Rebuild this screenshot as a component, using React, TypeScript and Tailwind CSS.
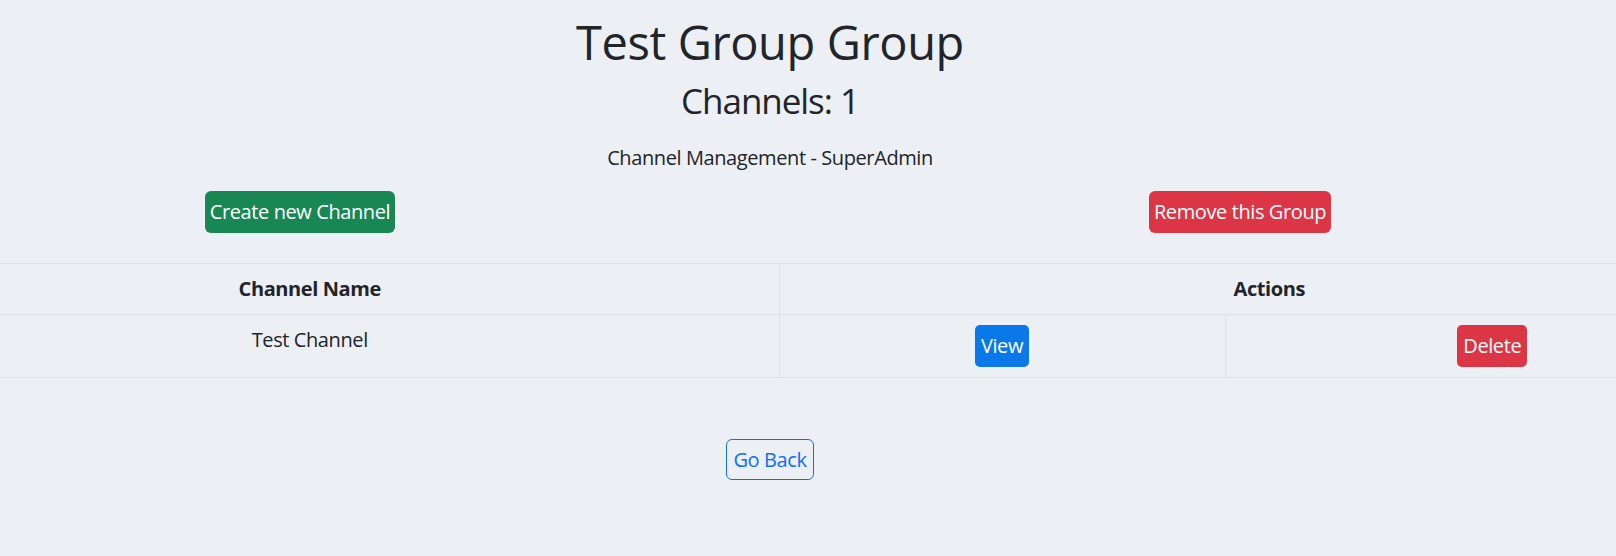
export default function App() {
  return (
    <div className="min-h-screen w-full overflow-hidden bg-[#eceff4] font-['Open_Sans','Noto_Sans',sans-serif] tracking-[-0.025em] text-[#212529]">
      {/* Heading */}
      <div className="w-[1540px] pt-[11px] text-center">
        <h1 className="text-[47px] leading-[63px]">Test Group Group</h1>
        <h3 className="mt-[6px] text-[35px] leading-[42px] tracking-[-0.03em]">Channels: 1</h3>
        <p className="mt-[21px] text-[20px] leading-[30px]">Channel Management - SuperAdmin</p>
      </div>

      {/* Top actions */}
      <div className="-ml-[170px] mt-[18px] grid w-[1880px] grid-cols-2 justify-items-center">
        <button className="rounded-[6px] bg-[#198754] px-[5px] py-[6px] text-[20px] leading-[30px] text-white">
          Create new Channel
        </button>
        <button className="rounded-[6px] bg-[#dc3545] px-[5px] py-[6px] text-[20px] leading-[30px] text-white">
          Remove this Group
        </button>
      </div>

      {/* Channels table */}
      <table className="-ml-[159px] mt-[30px] w-[1918px] table-fixed border-collapse text-[20px] leading-[30px]">
        <colgroup>
          <col className="w-[938px]" />
          <col className="w-[446px]" />
          <col className="w-[534px]" />
        </colgroup>
        <thead>
          <tr className="border-y border-[#dee2e6]">
            <th className="border-r border-[#dee2e6] py-[10px] text-center font-bold">Channel Name</th>
            <th colSpan={2} className="py-[10px] text-center font-bold">
              Actions
            </th>
          </tr>
        </thead>
        <tbody>
          <tr className="border-b border-[#dee2e6]">
            <td className="border-r border-[#dee2e6] py-[10px] text-center align-top">Test Channel</td>
            <td className="border-r border-[#dee2e6] py-[10px] text-center align-top">
              <button className="rounded-[5px] bg-[#0a78e8] px-[6px] py-[6px] text-[20px] leading-[30px] text-white">
                View
              </button>
            </td>
            <td className="py-[10px] text-center align-top">
              <button className="rounded-[5px] bg-[#dc3545] px-[6px] py-[6px] text-[20px] leading-[30px] text-white">
                Delete
              </button>
            </td>
          </tr>
        </tbody>
      </table>

      {/* Back */}
      <div className="mt-[61px] w-[1540px] text-center">
        <button className="rounded-[6px] border border-[#0d6efd] px-[6px] py-[4.5px] text-[20px] leading-[30px] text-[#0d6efd]">
          Go Back
        </button>
      </div>
    </div>
  );
}
